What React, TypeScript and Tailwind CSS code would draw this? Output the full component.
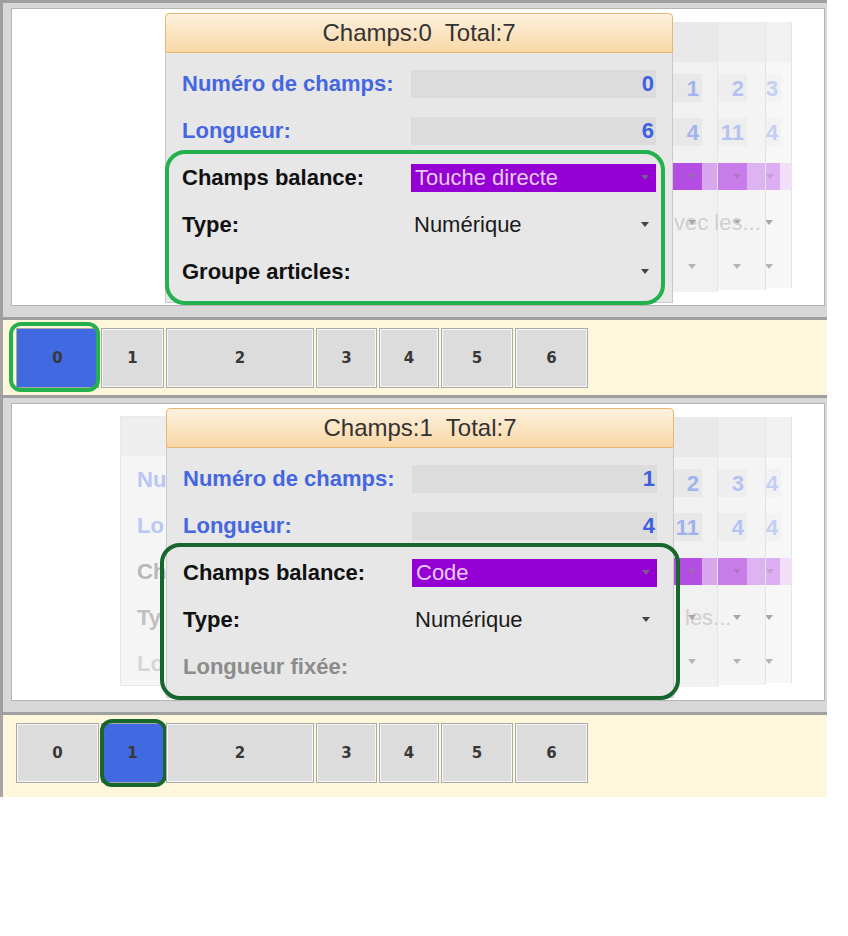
import React from "react";

type Ghost = {
  box: string;
  bg: string;
  head: string;
  pr: string;
  num: string;
  valBg: string;
  dark: string;
  light: string;
  caret: string;
  nums: [string, string];
  text?: string;
  textPad?: string;
};

function Caret({ className }: { className: string }) {
  return <span className={`inline-block h-0 w-0 border-x-[4px] border-t-[5px] border-x-transparent ${className}`} />;
}

// faded cards of the carousel, lying behind the open card
function GhostCard({ g }: { g: Ghost }) {
  return (
    <div className={`absolute top-[13px] border-r border-[#e4e4e4] ${g.box} ${g.bg}`}>
      <div className={`h-[40px] ${g.head}`} />
      <div className="pt-[4px]">
        {g.nums.map((n, i) => (
          <div key={i} className={`flex h-[44px] items-center ${g.pr}`}>
            <div className={`flex h-[28px] flex-1 items-center justify-end pr-[3px] text-[22px] font-bold ${g.num} ${g.valBg}`}>
              {n}
            </div>
          </div>
        ))}
        <div className="flex h-[44px] items-center">
          <div className={`flex h-[27px] w-full ${g.light} ${g.pr}`}>
            <div className={`flex flex-1 items-center justify-end pr-[6px] ${g.dark}`}>
              <Caret className={g.caret} />
            </div>
          </div>
        </div>
        <div className={`relative flex h-[44px] items-center justify-end ${g.pr}`}>
          {g.text && (
            <span className={`absolute top-[8px] whitespace-nowrap text-[22px] text-[#d0d0d0] ${g.textPad}`}>{g.text}</span>
          )}
          <span className="relative pr-[6px]">
            <Caret className="border-t-[#a8a8a8]" />
          </span>
        </div>
        <div className={`flex h-[44px] items-center justify-end ${g.pr}`}>
          <span className="pr-[6px]">
            <Caret className="border-t-[#b4b4b4]" />
          </span>
        </div>
      </div>
    </div>
  );
}

const ghostC = {
  box: "left-[754px] w-[26px] h-[266px]",
  bg: "bg-[#f7f7f7]",
  head: "bg-[#f1f1f1]",
  pr: "pr-[12px]",
  num: "text-[#c4cff4]",
  valBg: "bg-[#f2f2f2]",
  dark: "bg-[#dcaff2]",
  light: "bg-[#f1def8]",
  caret: "border-t-[#c6a0d8]",
};
const ghostB = {
  box: "left-[706px] w-[48px] h-[268px]",
  bg: "bg-[#f4f4f4]",
  head: "bg-[#eeeeee]",
  pr: "pr-[18px]",
  num: "text-[#b4c3f2]",
  valBg: "bg-[#eeeeee]",
  dark: "bg-[#c87cea]",
  light: "bg-[#ddb3f2]",
  caret: "border-t-[#a87ac0]",
};
const ghostA = {
  box: "left-[600px] w-[106px] h-[270px]",
  bg: "bg-[#f1f1f1]",
  head: "bg-[#e9e9e9]",
  pr: "pr-[15px]",
  num: "text-[#a0b3ee]",
  valBg: "bg-[#e8e8e8]",
  dark: "bg-[#b44de2]",
  light: "bg-[#d8a8ef]",
  caret: "border-t-[#9a6ab2]",
};

function Row({ label, labelClass, children }: { label: string; labelClass: string; children?: React.ReactNode }) {
  return (
    <div className="flex h-[47px] items-center px-[16px]">
      <div className={`w-[229px] whitespace-nowrap text-[22px] font-bold ${labelClass}`}>{label}</div>
      <div className="w-[245px]">{children}</div>
    </div>
  );
}

function ValueBox({ children }: { children: React.ReactNode }) {
  return (
    <div className="flex h-[28px] items-center justify-end bg-[#dcdcdc] pr-[2px] text-[22px] font-bold text-[#3d5fe0]">
      {children}
    </div>
  );
}

function Select({ text, purple }: { text?: string; purple?: boolean }) {
  return (
    <div
      className={`flex h-[28px] items-center justify-between pr-[7px] text-[22px] ${
        purple ? "bg-[#9400d3] pl-[4px] text-[#e6cbf2]" : "pl-[3px] text-[#1a1a1a]"
      }`}
    >
      <span>{text}</span>
      <Caret className={purple ? "border-t-[#7c5a8e]" : "border-t-[#444]"} />
    </div>
  );
}

function Popup({
  title,
  n1,
  n2,
  balance,
  last,
  offset,
  frame,
}: {
  title: string;
  n1: string;
  n2: string;
  balance: string;
  last: "groupe" | "fixee";
  offset: string;
  frame: string;
}) {
  return (
    <div className={`relative z-10 w-[508px] ${offset}`}>
      <div className="flex h-[40px] items-center justify-center whitespace-pre rounded-t-[4px] border border-[#e6b675] bg-gradient-to-b from-[#fdf1de] to-[#f8d8a6] text-[24px] text-[#333]">
        {title}
      </div>
      <div className="border-x border-b border-[#c9c9c9] bg-[#e7e7e7] py-[7px]">
        <Row label="Numéro de champs:" labelClass="text-[#4466e0]">
          <ValueBox>{n1}</ValueBox>
        </Row>
        <Row label="Longueur:" labelClass="text-[#4466e0]">
          <ValueBox>{n2}</ValueBox>
        </Row>
        <div className="relative">
          <div className={`pointer-events-none absolute rounded-[20px] border-[4px] ${frame}`} />
          <Row label="Champs balance:" labelClass="text-[#111]">
            <Select text={balance} purple />
          </Row>
          <Row label="Type:" labelClass="text-[#111]">
            <Select text="Numérique" />
          </Row>
          {last === "groupe" ? (
            <Row label="Groupe articles:" labelClass="text-[#111]">
              <Select />
            </Row>
          ) : (
            <Row label="Longueur fixée:" labelClass="text-[#8c8c8c]" />
          )}
        </div>
      </div>
    </div>
  );
}

function Panel({ children }: { children: React.ReactNode }) {
  return (
    <div className="h-[320px] w-[827px] border-b-[3px] border-l-[3px] border-t-[3px] border-[#9f9f9f] bg-[#d7d7d7] pb-[11px] pl-[8px] pr-[2px] pt-[5px]">
      <div className="relative h-full border border-[#b4b4b4] bg-white">{children}</div>
    </div>
  );
}

const TAB_W = ["w-[83px]", "w-[63px]", "w-[148px]", "w-[61px]", "w-[60px]", "w-[72px]", "w-[73px]"];

function TabBar({ active, height, frame }: { active: number; height: string; frame: string }) {
  return (
    <div className={`flex w-[827px] gap-[2px] border-l-[3px] border-[#a5a5a5] bg-[#fef7dc] pl-[13px] pt-[8px] ${height}`}>
      {TAB_W.map((w, i) => (
        <div
          key={i}
          className={`relative flex h-[60px] items-center justify-center border border-[#a9a9a9] font-['DejaVu_Sans',sans-serif] text-[15px] font-bold text-[#383838] ${w} ${
            i === active ? "bg-[#4169e1]" : "bg-[#dcdcdc] shadow-[inset_0_0_0_1px_#f6f6f6]"
          }`}
        >
          {i}
          {i === active && <div className={`absolute rounded-[12px] border-[4px] ${frame}`} />}
        </div>
      ))}
    </div>
  );
}

export default function App() {
  return (
    <div className="min-h-[936px] w-[848px] bg-white font-['Liberation_Sans',Arial,sans-serif]">
      <Panel>
        <GhostCard g={{ ...ghostC, nums: ["3", "4"] }} />
        <GhostCard g={{ ...ghostB, nums: ["2", "11"] }} />
        <GhostCard g={{ ...ghostA, nums: ["1", "4"], text: "vec les...", textPad: "left-[62px]" }} />
        <Popup
          title="Champs:0  Total:7"
          n1="0"
          n2="6"
          balance="Touche directe"
          last="groupe"
          offset="ml-[153px] mt-[4px]"
          frame="-left-[1px] right-[7px] -top-[4px] -bottom-[10px] border-[#22b14c]"
        />
      </Panel>
      <TabBar active={0} height="h-[75px]" frame="-left-[8px] -right-[2px] -top-[7px] -bottom-[5px] border-[#22b14c]" />
      <Panel>
        {/* previous card, on the left, mostly hidden by the open card */}
        <div className="absolute left-[108px] top-[12px] h-[270px] w-[46px] overflow-hidden border-y border-l border-[#e9e9e9] bg-[#f5f5f5]">
          <div className="h-[39px] bg-[#eeeeee]" />
          <div className="flex h-[46px] items-center whitespace-nowrap pl-[16px] text-[22px] font-bold text-[#bac6f3]">Nu</div>
          <div className="flex h-[46px] items-center whitespace-nowrap pl-[16px] text-[22px] font-bold text-[#bac6f3]">Lo</div>
          <div className="flex h-[46px] items-center whitespace-nowrap pl-[16px] text-[22px] font-bold text-[#b8b8b8]">Ch</div>
          <div className="flex h-[46px] items-center whitespace-nowrap pl-[16px] text-[22px] font-bold text-[#c0c0c0]">Ty</div>
          <div className="flex h-[46px] items-center whitespace-nowrap pl-[16px] text-[22px] font-bold text-[#d6d6d6]">Lo</div>
        </div>
        <GhostCard g={{ ...ghostC, nums: ["4", "4"] }} />
        <GhostCard g={{ ...ghostB, nums: ["3", "4"] }} />
        <GhostCard g={{ ...ghostA, nums: ["2", "11"], text: "les...", textPad: "left-[73px]" }} />
        <Popup
          title="Champs:1  Total:7"
          n1="1"
          n2="4"
          balance="Code"
          last="fixee"
          offset="ml-[154px] mt-[4px]"
          frame="-left-[7px] -right-[7px] -top-[6px] -bottom-[10px] border-[#17662c]"
        />
      </Panel>
      <TabBar active={1} height="h-[82px]" frame="-left-[2px] -right-[4px] -top-[5px] -bottom-[5px] border-[#17662c]" />
    </div>
  );
}
